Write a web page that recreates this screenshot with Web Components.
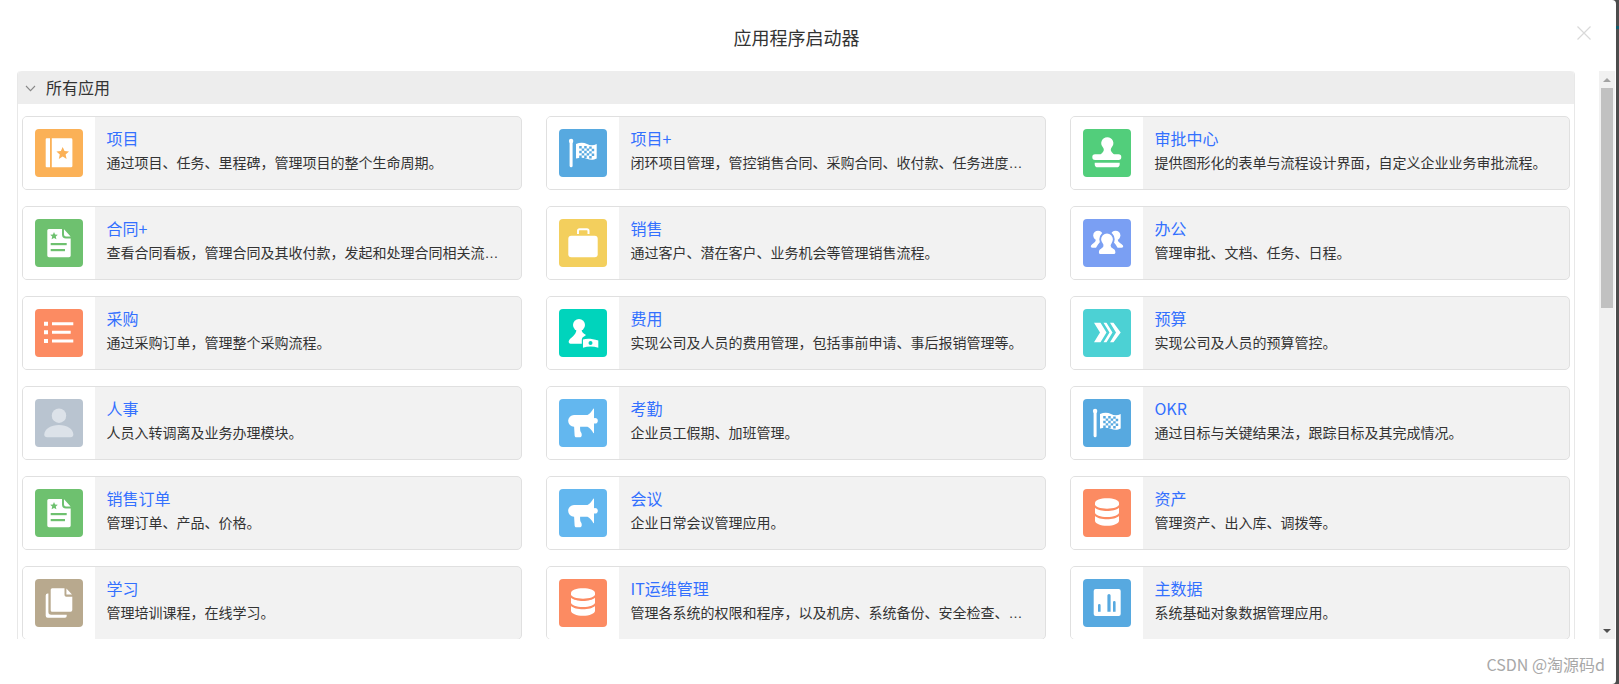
<!DOCTYPE html>
<html lang="zh-CN">
<head>
<meta charset="utf-8">
<title>应用程序启动器</title>
<style>
html,body{margin:0;padding:0;height:100%;background:#4c4c4c;overflow:hidden;}
body{font-family:"Noto Sans CJK SC","Liberation Sans",sans-serif;}
</style>
</head>
<body>
<launcher-dialog heading="应用程序启动器" watermark="CSDN @淘源码d">
  <app-section heading="所有应用">
    <app-card name="项目" icon="book" color="#fbb157">通过项目、任务、里程碑，管理项目的整个生命周期。</app-card>
    <app-card name="项目+" icon="flag" color="#57a9e0">闭环项目管理，管控销售合同、采购合同、收付款、任务进度…</app-card>
    <app-card name="审批中心" icon="stamp" color="#52ce7b">提供图形化的表单与流程设计界面，自定义企业业务审批流程。</app-card>
    <app-card name="合同+" icon="doc" color="#6ec16f">查看合同看板，管理合同及其收付款，发起和处理合同相关流…</app-card>
    <app-card name="销售" icon="case" color="#f3cf5d">通过客户、潜在客户、业务机会等管理销售流程。</app-card>
    <app-card name="办公" icon="users" color="#7a9ff3">管理审批、文档、任务、日程。</app-card>
    <app-card name="采购" icon="list" color="#fc8b62">通过采购订单，管理整个采购流程。</app-card>
    <app-card name="费用" icon="expense" color="#00d4bc">实现公司及人员的费用管理，包括事前申请、事后报销管理等。</app-card>
    <app-card name="预算" icon="chevrons" color="#4cd1d4">实现公司及人员的预算管控。</app-card>
    <app-card name="人事" icon="person" color="#b9c4d0">人员入转调离及业务办理模块。</app-card>
    <app-card name="考勤" icon="horn" color="#63b7ef">企业员工假期、加班管理。</app-card>
    <app-card name="OKR" icon="flag" color="#57a9e0">通过目标与关键结果法，跟踪目标及其完成情况。</app-card>
    <app-card name="销售订单" icon="doc" color="#6ec16f">管理订单、产品、价格。</app-card>
    <app-card name="会议" icon="horn" color="#63b7ef">企业日常会议管理应用。</app-card>
    <app-card name="资产" icon="db" color="#fc8b62">管理资产、出入库、调拨等。</app-card>
    <app-card name="学习" icon="copy" color="#b8a98e">管理培训课程，在线学习。</app-card>
    <app-card name="IT运维管理" icon="db" color="#fc8b62">管理各系统的权限和程序，以及机房、系统备份、安全检查、…</app-card>
    <app-card name="主数据" icon="chart" color="#57a9e0">系统基础对象数据管理应用。</app-card>
  </app-section>
</launcher-dialog>
<backdrop-mark></backdrop-mark>

<script>
function checker(){
  let d='';
  for(let r=0;r<5;r++)for(let c=0;c<6;c++){
    if((r+c)%2===0){
      const x=20.2+c*2.5, y=17+r*2.4+(c>3?0.4:0);
      d+=`M${x} ${y}h2.5v2.4h-2.5z`;
    }
  }
  return d;
}
const ICONS={
  book:c=>`<path fill="#fff" d="M11.7 9.3H15V38.3H11.7a1 1 0 0 1-1-1V10.3a1 1 0 0 1 1-1zM16.8 9.3H36a1.4 1.4 0 0 1 1.4 1.4V36.9A1.4 1.4 0 0 1 36 38.3H16.8z"/>
    <path fill="${c}" d="M27.7 18l1.8 4.1 4.5.4-3.4 3 1 4.4-3.9-2.3-3.9 2.3 1-4.4-3.4-3 4.5-.4z"/>`,
  doc:c=>`<path fill="#fff" d="M13.800 10H27L27 15.500A4 4 0 0 0 31 19.500H35.700V36.600A1.700 1.700 0 0 1 34 38.300H14A1.700 1.700 0 0 1 12.300 36.600V11.500A1.500 1.500 0 0 1 13.800 10zM29 10.200L35.600 17.500H31A2 2 0 0 1 29 15.500z"/>
    <path fill="${c}" d="M19 13l1.100 2.400 2.700.3-2 1.800.6 2.700L19 18.900l-2.400 1.300.6-2.700-2-1.800 2.700-.3z"/>
    <rect fill="${c}" x="15.700" y="24" width="16" height="2.200"/><rect fill="${c}" x="15.700" y="30" width="14.300" height="2.200"/>`,
  list:()=>`<path fill="#fff" d="M9 12.700h4v4H9zM9 21.200h4v4H9zM9 30h4v4H9zM17 13.200h21.300v3H17zM17 21.700h18.700v3H17zM17 30.500h21.300v3H17z"/>`,
  person:()=>`<circle fill="#dce2e9" cx="24" cy="16.700" r="7.200"/><path fill="#dce2e9" d="M9.300 35.500C9.300 30 16 26 24 26S38.300 30 38.300 35.500A2.800 2.800 0 0 1 35.500 38.300H12.100A2.800 2.800 0 0 1 9.300 35.500z"/>`,
  copy:()=>`<path fill="#fff" d="M17.200 9.300H29.500V16A1.700 1.700 0 0 0 31.200 17.700H37.300V31A1.700 1.700 0 0 1 35.600 32.700H17.200A1.500 1.500 0 0 1 15.700 31.200V10.800A1.500 1.500 0 0 1 17.200 9.300zM31.400 9.600L37 15.600H31.400z"/>
    <path fill="#fff" d="M10.700 16.500A2 2 0 0 1 12.700 14.500H13.400V33A2.800 2.800 0 0 0 16.200 35.800H31.700V37A1.700 1.700 0 0 1 30 38.700H12.700A2 2 0 0 1 10.700 36.700z"/>`,
  flag:c=>`<rect fill="#fff" x="10.600" y="12" width="3" height="26.300" rx="1.500"/><circle fill="#fff" cx="12.100" cy="12" r="2.200"/>
    <path fill="#fff" d="M17 15C21 13.400 25 13.600 28 15S34 16.800 37.700 15V29.500C34 31.300 31 31 28 29.700S21 28.200 17 29.600z"/>
    <path fill="${c}" d="${checker()}"/>`,
  case:()=>`<path fill="none" stroke="#fff" stroke-width="2" d="M19 15V11.800A1.600 1.600 0 0 1 20.600 10.200H27.900A1.600 1.600 0 0 1 29.500 11.800V15"/>
    <rect fill="#fff" x="9.300" y="16.700" width="29.400" height="21.600" rx="3"/>`,
  expense:c=>`<circle fill="#fff" cx="20" cy="16" r="6"/>
    <path fill="#fff" d="M17.500 20H22.500C22.500 23 24 24.500 27 26L25 27.500C23 28.500 22.800 30 22.800 31.500V34.700H11.500A2 2 0 0 1 9.800 32C11 28.500 17.500 26.500 17.500 20z"/>
    <path fill="#fff" d="M24 30.500C28 29 33 29.500 39.300 31.500V38.700C34 37 29 37 24 38.700z"/>
    <circle fill="${c}" cx="31.500" cy="34" r="2"/>`,
  horn:()=>`<circle fill="#fff" cx="36" cy="21.700" r="2.800"/>
    <path fill="#fff" d="M15 16H28.500C30.500 15 33 12 34.300 9.700C34.600 9.200 35 9.400 35 10V33.600C35 34.200 34.600 34.400 34.300 33.900C33 31.500 30.500 28.700 28.500 27.700H15A5.800 5.800 0 0 1 15 16z"/>
    <path fill="#fff" d="M15 26H21.300C21 28.500 21 31 21.500 32.500C22 33.500 22.700 34 22.700 35.500V36.500C22.700 37.600 21.800 38.300 20.700 38.300H17.500C16.200 38.300 15.600 37.300 15.600 36.200z"/>`,
  db:()=>`<path fill="#fff" d="M12 14C12 11 17.500 9.300 24 9.300S36 11 36 14V15.300C36 18 30.500 19.700 24 19.700S12 18 12 15.300z"/>
    <path fill="#fff" d="M12 18.800C14 20.800 19 22 24 22S34 20.800 36 18.800V23.500C36 26.200 30.500 28 24 28S12 26.200 12 23.500z"/>
    <path fill="#fff" d="M12 27C14 29 19 30.300 24 30.300S34 29 36 27V31.700C36 34.600 30.500 36.700 24 36.700S12 34.600 12 31.700z"/>`,
  stamp:()=>`<path fill="#fff" d="M24.300 8.200A6 6 0 0 1 28.600 18.400C27.600 19.800 27.600 21 28.200 22.200C29 23.600 30 24.400 31 25.300H35.500A2.800 2.800 0 0 1 38.300 28.100A2.800 2.800 0 0 1 35.500 31H12.100A2.800 2.800 0 0 1 9.300 28.100A2.800 2.800 0 0 1 12.100 25.300H17.600C18.600 24.400 19.600 23.600 20.400 22.200C21 21 21 19.800 20 18.400A6 6 0 0 1 24.300 8.200z"/>
    <path fill="#fff" d="M11.700 33.700H36.700V35.200A3.100 3.100 0 0 1 33.600 38.300H14.800A3.100 3.100 0 0 1 11.700 35.200z"/>`,
  users:c=>`<g fill="#fff"><circle cx="15" cy="16.500" r="4.800"/><path d="M12.800 20.500H17.200C17.500 22.500 16.500 24 15 25.500L13 28.800H9.500C8 28.800 7.300 27.500 8.200 26.300C9.500 24.500 12.800 23.500 12.800 20.500z"/>
    <circle cx="32.600" cy="16.500" r="4.800"/><path d="M34.800 20.500H30.400C30.100 22.500 31.100 24 32.600 25.500L34.600 28.800H38.500C40 28.800 40.700 27.500 39.800 26.300C38.500 24.500 34.800 23.500 34.800 20.500z"/></g>
    <path fill="#fff" stroke="${c}" stroke-width="1.800" d="M24 13.500A6.800 6.800 0 0 1 30.800 20.300C30.800 23.500 28.800 24.800 28.500 26.500C28.300 28 30.500 28.700 32 29.800C33.200 30.800 33.300 32 33.300 33.500C33.300 35 32.300 36 30.800 36H17.500C16 36 15 35 15 33.500C15 32 15.100 30.800 16.300 29.800C17.800 28.700 20 28 19.700 26.500C19.400 24.800 17.200 23.500 17.200 20.300A6.800 6.800 0 0 1 24 13.500z"/>`,
  chevrons:()=>`<path fill="#fff" d="M11 13.700H17.500L23.500 23.500 17.500 33.300H11L17 23.500zM20.500 13.700H23.500L29.500 23.500 23.500 33.300H20.500L26.500 23.500zM27 13.700H30.500L37.700 23.500 30.500 33.300H27L33 23.500z"/>`,
  chart:c=>`<rect fill="#fff" x="10.700" y="10" width="27" height="27" rx="2"/>
    <path fill="${c}" d="M15 26.200a1.300 1.300 0 0 1 2.600 0V32.700H15zM24.400 16.600a1.600 1.600 0 0 1 3.200 0V32.700H24.400zM30 23.200a1.300 1.300 0 0 1 2.600 0V32.700H30z"/>`
};

class AppIcon extends HTMLElement{
  constructor(){
    super();
    const color=this.getAttribute('color')||'#999';
    const draw=ICONS[this.getAttribute('icon')]||(()=>'');
    this.attachShadow({mode:'open'}).innerHTML=`<style>
      :host{display:block;width:48px;height:48px;flex:none;}
      svg{display:block;width:48px;height:48px;}
    </style><svg viewBox="0 0 48 48" aria-hidden="true"><rect width="48" height="48" rx="4" fill="${color}"/>${draw(color)}</svg>`;
  }
}
customElements.define('app-icon',AppIcon);

class AppCard extends HTMLElement{
  constructor(){
    super();
    const name=this.getAttribute('name')||'';
    const icon=this.getAttribute('icon')||'';
    const color=this.getAttribute('color')||'';
    this.attachShadow({mode:'open'}).innerHTML=`<style>
      :host{display:flex;box-sizing:border-box;height:74px;min-width:0;border:1px solid #e0e0e0;border-radius:5px;overflow:hidden;background:#f2f2f2;}
      .lead{flex:none;width:72px;box-sizing:border-box;padding:12px;background:#fff;}
      .text{flex:1;min-width:0;box-sizing:border-box;padding:10px 16px 0 11.5px;}
      .name{font-size:16px;line-height:22px;color:#3370ff;white-space:nowrap;}
      .desc{margin-top:3px;font-family:"Liberation Sans","Noto Sans CJK SC",sans-serif;font-size:14px;line-height:22px;color:#333;white-space:nowrap;}
    </style>
    <div class="lead"><app-icon icon="${icon}" color="${color}"></app-icon></div>
    <div class="text"><div class="name">${name}</div><div class="desc"><slot></slot></div></div>`;
  }
}
customElements.define('app-card',AppCard);

class AppSection extends HTMLElement{
  constructor(){
    super();
    const h=this.getAttribute('heading')||'';
    this.attachShadow({mode:'open'}).innerHTML=`<style>
      :host{display:block;box-sizing:border-box;border:1px solid #e8e8e8;border-top:0;border-bottom:0;border-radius:4px 4px 0 0;}
      .head{display:flex;align-items:center;gap:10px;height:33px;box-sizing:border-box;padding-left:7px;background:#ededed;border-radius:4px 4px 0 0;font-size:16px;color:#333;}
      .head span{margin-top:-2px;}
      svg{display:block;width:11px;height:7px;flex:none;margin-top:1px;}
      .grid{display:grid;grid-template-columns:repeat(3,minmax(0,1fr));gap:16px 24px;padding:12px 4px;}
    </style>
    <div class="head"><svg viewBox="0 0 11 7" aria-hidden="true"><path d="M1 1l4.500 4.600L10 1" fill="none" stroke="#888" stroke-width="1.100"/></svg><span>${h}</span></div>
    <div class="grid"><slot></slot></div>`;
  }
}
customElements.define('app-section',AppSection);

class FakeScrollbar extends HTMLElement{
  constructor(){
    super();
    this.attachShadow({mode:'open'}).innerHTML=`<style>
      :host{display:flex;flex-direction:column;flex:none;width:16px;background:#f1f1f1;box-sizing:border-box;}
      .btn{flex:none;height:17px;display:flex;align-items:center;justify-content:center;}
      .arrow{width:0;height:0;border-left:4px solid transparent;border-right:4px solid transparent;}
      .up{border-bottom:4px solid #a3a3a3;}
      .down{border-top:4px solid #505050;}
      .thumb{flex:none;height:220px;margin:0 2px;background:#c1c1c1;}
      .rest{flex:1;}
    </style>
    <div class="btn"><div class="arrow up"></div></div>
    <div class="thumb"></div>
    <div class="rest"></div>
    <div class="btn"><div class="arrow down"></div></div>`;
  }
}
customElements.define('fake-scrollbar',FakeScrollbar);

class BackdropMark extends HTMLElement{
  constructor(){
    super();
    this.attachShadow({mode:'open'}).innerHTML=`<style>
      :host{display:block;position:absolute;left:1616px;top:26px;width:3px;height:3px;background:#0f5c6e;}
    </style>`;
  }
}
customElements.define('backdrop-mark',BackdropMark);

class LauncherDialog extends HTMLElement{
  constructor(){
    super();
    const h=this.getAttribute('heading')||'';
    const w=this.getAttribute('watermark')||'';
    this.attachShadow({mode:'open'}).innerHTML=`<style>
      :host{display:flex;flex-direction:column;position:relative;box-sizing:border-box;width:1616px;height:684px;background:#fff;border-radius:0 4px 4px 0;overflow:hidden;}
      .title{flex:none;height:71px;box-sizing:border-box;padding:13px 23px 10px 0;display:flex;align-items:center;justify-content:center;font-size:18px;color:#333;}
      .close{position:absolute;left:1577px;top:26px;width:14px;height:14px;}
      .close svg{display:block;width:14px;height:14px;}
      .body{flex:none;height:568px;display:flex;overflow:hidden;padding-right:1px;}
      .scroll{flex:1;min-width:0;height:100%;overflow:hidden;padding:0 24px 0 17px;}
      .foot{flex:1;display:flex;justify-content:flex-end;align-items:flex-start;padding:13px 11px 0 0;font-size:16px;line-height:24px;color:#a8a8a8;}
    </style>
    <div class="title">${h}</div>
    <div class="close"><svg viewBox="0 0 14 14" aria-hidden="true"><path d="M.5.5l13 13M13.500.5l-13 13" stroke="#d9d9d9" stroke-width="1.200" fill="none"/></svg></div>
    <div class="body"><div class="scroll"><slot></slot></div><fake-scrollbar></fake-scrollbar></div>
    <div class="foot"><span>${w}</span></div>`;
  }
}
customElements.define('launcher-dialog',LauncherDialog);
</script>
</body>
</html>
